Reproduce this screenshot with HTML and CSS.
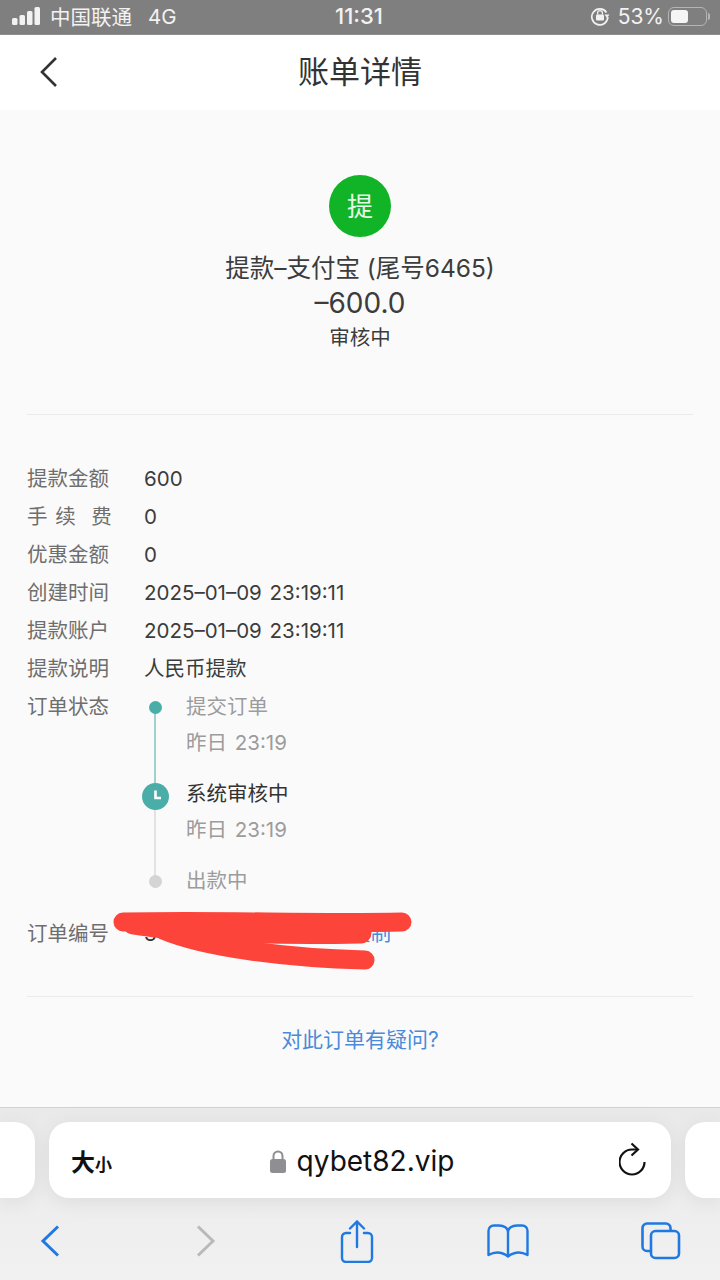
FILE: index.html
```html
<!DOCTYPE html>
<html lang="zh-CN">
<head>
    <meta charset="UTF-8">
    <meta name="viewport" content="width=device-width, initial-scale=1.0">
    <title>账单详情</title>
    <link rel="stylesheet" href="styles.css">
</head>
<body>
    <div class="status-bar">
        <div class="status-left">
            <svg class="signal" width="30" height="18" viewBox="0 0 30 18">
                <rect x="0" y="11" width="5.5" height="7" rx="1.5"/>
                <rect x="7.5" y="8" width="5.5" height="10" rx="1.5"/>
                <rect x="15" y="4" width="5.5" height="14" rx="1.5"/>
                <rect x="22.5" y="0" width="5.5" height="18" rx="1.5"/>
            </svg>
            <span>中国联通</span>
            <span class="network">4G</span>
        </div>
        <div class="status-time">11:31</div>
        <div class="status-right">
            <svg class="rotate-lock" width="20" height="20" viewBox="0 0 20 20">
                <path d="M16.5 6.5A8 8 0 1 0 17.8 11" fill="none" stroke="#f2f2f2" stroke-width="1.7"/>
                <path d="M14.5 8.5h5l-2.5 3.4z" fill="#f2f2f2"/>
                <rect x="6" y="8.6" width="8" height="6" rx="1" fill="#f2f2f2"/>
                <path d="M7.6 8.6V7a2.4 2.4 0 0 1 4.8 0v1.6" fill="none" stroke="#f2f2f2" stroke-width="1.3"/>
            </svg>
            <span>53%</span>
            <div class="battery"><div class="battery-level" style="width: 53%"></div></div>
            <div class="battery-tip"></div>
        </div>
    </div>

    <header class="nav-bar">
        <svg class="nav-back" width="20" height="32" viewBox="0 0 20 32">
            <path d="M17 2L3 16l14 14" fill="none" stroke="#333" stroke-width="2.6"/>
        </svg>
        <h1>账单详情</h1>
    </header>

    <main class="content">
        <section class="summary">
            <div class="type-icon">提</div>
            <div class="summary-title">提款–支付宝 (尾号6465)</div>
            <div class="summary-amount">–600.0</div>
            <div class="summary-status">审核中</div>
        </section>

        <section class="details">
            <div class="row"><span class="label">提款金额</span><span>600</span></div>
            <div class="row"><span class="label">手 续  费</span><span>0</span></div>
            <div class="row"><span class="label">优惠金额</span><span>0</span></div>
            <div class="row"><span class="label">创建时间</span><span>2025–01–09 23:19:11</span></div>
            <div class="row"><span class="label">提款账户</span><span>2025–01–09 23:19:11</span></div>
            <div class="row"><span class="label">提款说明</span><span>人民币提款</span></div>
            <div class="row row-timeline">
                <span class="label">订单状态</span>
                <div class="timeline">
                    <div class="step step-done">
                        <div class="marker"><span class="dot"></span></div>
                        <div class="step-text">
                            <div class="step-name">提交订单</div>
                            <div class="step-time">昨日 23:19</div>
                        </div>
                    </div>
                    <div class="step step-current">
                        <div class="marker">
                            <svg class="clock" width="27" height="27" viewBox="0 0 27 27">
                                <circle cx="13.5" cy="13.5" r="13.5" fill="#4bada8"/>
                                <path d="M13.5 7.5V15H19" fill="none" stroke="#fff" stroke-width="2.6"/>
                            </svg>
                        </div>
                        <div class="step-text">
                            <div class="step-name">系统审核中</div>
                            <div class="step-time">昨日 23:19</div>
                        </div>
                    </div>
                    <div class="step step-todo">
                        <div class="marker"><span class="dot"></span></div>
                        <div class="step-text">
                            <div class="step-name">出款中</div>
                        </div>
                    </div>
                </div>
            </div>
            <div class="row row-order">
                <span class="label">订单编号</span>
                <span class="order-no">3</span>
                <span class="copy">复制</span>
                <svg class="scribble" width="320" height="70" viewBox="0 0 320 70">
                    <path d="M10 15C110 13 200 17 289 15" stroke-width="19"/>
                    <path d="M20 17C60 24 150 28 248 26" stroke-width="21"/>
                    <path d="M50 23C90 40 170 51 252 53" stroke-width="19"/>
                </svg>
            </div>
        </section>

        <a class="question">对此订单有疑问?</a>
    </main>

    <footer class="browser">
        <div class="address-row">
            <div class="tab-peek tab-peek-left"></div>
            <div class="address">
                <div class="font-size">大<small>小</small></div>
                <div class="url">
                    <svg width="16" height="23" viewBox="0 0 16 23">
                        <path d="M3.5 10V6a4.500 4.500 0 0 1 9 0v4" fill="none" stroke="#8e8e93" stroke-width="2"/>
                        <rect x="0" y="9" width="16" height="14" rx="2.5" fill="#8e8e93"/>
                    </svg>
                    <span>qybet82.vip</span>
                </div>
                <svg class="reload" width="28" height="34" viewBox="0 0 28 34">
                    <path d="M18 7.500H13A12.500 12.500 0 1 0 25.500 20" fill="none" stroke="#111" stroke-width="2.200"/>
                    <path d="M12.500 1.500L19 7.500l-6.500 6" fill="none" stroke="#111" stroke-width="2.200"/>
                </svg>
            </div>
            <div class="tab-peek tab-peek-right"></div>
        </div>
        <div class="toolbar">
            <span class="tool">
                <svg width="20" height="32" viewBox="0 0 20 32">
                    <path d="M18 1.500L3 16l15 14.500" fill="none" stroke="#1f79e0" stroke-width="3"/>
                </svg>
            </span>
            <span class="tool tool-forward">
                <svg width="20" height="32" viewBox="0 0 20 32">
                    <path d="M2 1.500L17 16 2 30.500" fill="none" stroke="#b9b9bb" stroke-width="3"/>
                </svg>
            </span>
            <span class="tool tool-share">
                <svg width="34" height="43" viewBox="0 0 34 43">
                    <path d="M10 13H6a4 4 0 0 0-4 4v21a4 4 0 0 0 4 4h22a4 4 0 0 0 4-4V17a4 4 0 0 0-4-4h-4" fill="none" stroke="#1f79e0" stroke-width="2.400" stroke-linecap="round"/>
                    <path d="M17 27V2M10 8.500L17 1.500l7 7" fill="none" stroke="#1f79e0" stroke-width="2.400" stroke-linecap="round"/>
                </svg>
            </span>
            <span class="tool">
                <svg width="42" height="35" viewBox="0 0 42 35">
                    <path d="M21 8C21 4 17 1.500 12 1.500H7C3.500 1.500 1.500 4 1.500 7V31C8 27.500 15 28 21 32.500 27 28 34 27.500 40.500 31V7C40.500 4 38.500 1.500 35 1.500H30C25 1.500 21 4 21 8ZM21 8V31" fill="none" stroke="#1f79e0" stroke-width="2.400" stroke-linejoin="round"/>
                </svg>
            </span>
            <span class="tool">
                <svg width="40" height="38" viewBox="0 0 40 38">
                    <rect x="10" y="9" width="28" height="27" rx="4.500" fill="none" stroke="#1f79e0" stroke-width="2.600"/>
                    <path d="M10 29H6a4.500 4.500 0 0 1-4.500-4.500V6A4.500 4.500 0 0 1 6 1.500h19A4.500 4.500 0 0 1 29.500 6v3" fill="none" stroke="#1f79e0" stroke-width="2.600"/>
                </svg>
            </span>
        </div>
    </footer>
</body>
</html>
```

FILE: styles.css
```css
* {
    box-sizing: border-box;
}
body {
    margin: 0;
    width: 720px;
    height: 1280px;
    overflow: hidden;
    display: flex;
    flex-direction: column;
    font-family: Inter, "Noto Sans CJK SC", sans-serif;
    font-size: 20.5px;
    color: #3c3c3c;
    background: #fafafa;
}

/* status bar */
.status-bar {
    height: 35px;
    flex: none;
    display: flex;
    align-items: center;
    justify-content: space-between;
    padding: 0 10px 2px 12px;
    background: #7f7f7f;
    border-bottom: 1px solid #8e8e8e;
    color: #f2f2f2;
}
.status-left {
    display: flex;
    align-items: center;
    width: 250px;
}
.signal {
    fill: #f2f2f2;
    margin-right: 8px;
}
.network {
    margin-left: 16px;
}
.status-time {
    font-size: 22px;
    font-weight: 500;
    margin-right: 4px;
}
.status-right {
    display: flex;
    align-items: center;
    justify-content: flex-end;
    width: 250px;
    font-size: 21px;
}
.rotate-lock {
    margin-right: 8px;
}
.battery {
    width: 39px;
    height: 19px;
    margin-left: 4px;
    padding: 2px;
    border: 1.5px solid #b4b4b4;
    border-radius: 6px;
}
.battery-level {
    height: 100%;
    background: #f5f5f5;
    border-radius: 3px;
}
.battery-tip {
    width: 2px;
    height: 7px;
    margin-left: 1px;
    background: #b4b4b4;
    border-radius: 0 2px 2px 0;
}

/* page header */
.nav-bar {
    height: 75px;
    flex: none;
    position: relative;
    display: flex;
    align-items: center;
    justify-content: center;
    background: #fff;
}
.nav-bar h1 {
    margin: 0 0 6px;
    font-size: 31px;
    font-weight: normal;
    color: #333;
}
.nav-back {
    position: absolute;
    left: 39px;
    top: 21px;
}

/* page body */
.content {
    flex: 1;
    padding: 0 27px;
    background: #fafafa;
}
.summary {
    display: flex;
    flex-direction: column;
    align-items: center;
    padding: 65px 0 59px;
    border-bottom: 1px solid #ececec;
}
.type-icon {
    width: 62px;
    height: 62px;
    padding-bottom: 3px;
    border-radius: 50%;
    display: flex;
    align-items: center;
    justify-content: center;
    background: #12b427;
    color: #e8f8ea;
    font-size: 26px;
}
.summary-title {
    margin-top: 13px;
    font-size: 24.5px;
    line-height: 36px;
}
.summary-amount {
    font-size: 28px;
    line-height: 35px;
}
.summary-status {
    line-height: 34px;
}
.details {
    padding: 45px 0 43px;
    border-bottom: 1px solid #ececec;
    word-spacing: 2px;
}
.row {
    display: flex;
    line-height: 38px;
}
.label {
    width: 117px;
    flex: none;
    color: #6e6e6e;
    white-space: pre;
}
.timeline {
    margin-left: -2px;
}
.step {
    position: relative;
    display: flex;
    height: 87px;
}
.step-todo {
    height: 38px;
}
.step-done::before,
.step-current::before {
    content: "";
    position: absolute;
    left: 12px;
    top: 19px;
    width: 2px;
    height: 87px;
}
.step-done::before {
    background: #9ed2cf;
}
.step-current::before {
    background: #e2e2e2;
}
.marker {
    position: relative;
    width: 26px;
    height: 38px;
    margin-right: 18px;
    display: flex;
    align-items: center;
    justify-content: center;
}
.dot {
    width: 13px;
    height: 13px;
    border-radius: 50%;
    background: #4bada8;
}
.step-todo .dot {
    background: #d4d4d4;
}
.clock {
    flex: none;
    margin-top: 4px;
}
.step-name {
    color: #9c9c9c;
}
.step-current .step-name {
    color: #333;
}
.step-time {
    line-height: 34px;
    color: #9c9c9c;
}
.row-order {
    position: relative;
    margin-top: 15px;
}
.order-no {
    width: 206px;
    color: #333;
}
.copy {
    color: #4a8ad8;
}
.scribble {
    position: absolute;
    left: 86px;
    top: -8px;
    fill: none;
    stroke: #fd443b;
    stroke-linecap: round;
}
.question {
    display: block;
    margin-top: 24px;
    font-size: 21px;
    line-height: 38px;
    text-align: center;
    color: #4a8ad8;
}

/* safari chrome */
.browser {
    height: 173px;
    flex: none;
    background: linear-gradient(#e9e9ea, #f1f1f2);
    border-top: 1px solid #d2d2d2;
}
.address-row {
    display: flex;
    gap: 14px;
    margin-top: 14px;
    height: 76px;
}
.tab-peek {
    width: 35px;
    flex: none;
    background: #fff;
    box-shadow: 0 4px 20px rgba(0,0,0,0.07);
}
.tab-peek-left {
    border-radius: 0 20px 20px 0;
}
.tab-peek-right {
    border-radius: 20px 0 0 20px;
}
.address {
    flex: 1;
    position: relative;
    display: flex;
    align-items: center;
    justify-content: center;
    background: #fff;
    border-radius: 20px;
    box-shadow: 0 4px 20px rgba(0,0,0,0.07);
}
.font-size {
    position: absolute;
    left: 22px;
    font-size: 24px;
    font-weight: bold;
    color: #111;
}
.font-size small {
    font-size: 17px;
}
.url {
    display: flex;
    align-items: center;
    gap: 11px;
    margin: 2px 0 0 4px;
    font-size: 28px;
    color: #111;
}
.reload {
    position: absolute;
    right: 24px;
    top: 20px;
}
.toolbar {
    display: flex;
    align-items: center;
    justify-content: space-between;
    height: 86px;
    padding: 0 38px 0 29px;
}
.tool {
    width: 42px;
    display: flex;
    justify-content: center;
}
.tool-forward svg {
    margin-left: 7px;
}
.tool-share svg {
    margin-left: 3px;
}
```
